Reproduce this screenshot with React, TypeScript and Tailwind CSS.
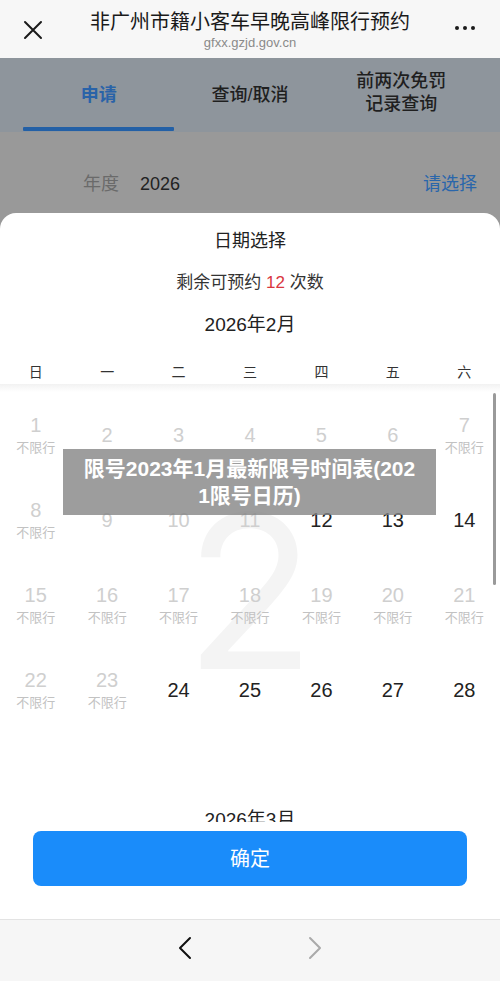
import React from "react";

const FONT = '"Liberation Sans", "Noto Sans CJK SC", sans-serif';

type Cell = { d: number; gray: boolean; sub: boolean };

const rows: Cell[][] = [
  [
    { d: 1, gray: true, sub: true },
    { d: 2, gray: true, sub: false },
    { d: 3, gray: true, sub: false },
    { d: 4, gray: true, sub: false },
    { d: 5, gray: true, sub: false },
    { d: 6, gray: true, sub: false },
    { d: 7, gray: true, sub: true },
  ],
  [
    { d: 8, gray: true, sub: true },
    { d: 9, gray: true, sub: false },
    { d: 10, gray: true, sub: false },
    { d: 11, gray: true, sub: false },
    { d: 12, gray: false, sub: false },
    { d: 13, gray: false, sub: false },
    { d: 14, gray: false, sub: false },
  ],
  [15, 16, 17, 18, 19, 20, 21].map((d) => ({ d, gray: true, sub: true })),
  [
    { d: 22, gray: true, sub: true },
    { d: 23, gray: true, sub: true },
    { d: 24, gray: false, sub: false },
    { d: 25, gray: false, sub: false },
    { d: 26, gray: false, sub: false },
    { d: 27, gray: false, sub: false },
    { d: 28, gray: false, sub: false },
  ],
];

const weekdays = ["日", "一", "二", "三", "四", "五", "六"];

export default function App() {
  return (
    <div
      className="w-[500px] h-[981px] flex flex-col overflow-hidden bg-[#999999]"
      style={{ fontFamily: FONT }}
    >
      {/* Header */}
      <div className="h-[58px] bg-[#f7f7f7] relative flex flex-col items-center shrink-0">
        <svg
          className="absolute left-[22px] top-[19px]"
          width="22"
          height="22"
          viewBox="0 0 22 22"
          fill="none"
          stroke="#1a1a1a"
          strokeWidth="2"
          strokeLinecap="round"
        >
          <path d="M3 3 L19 19 M19 3 L3 19" />
        </svg>
        <div className="text-[20px] leading-[26px] text-[#1a1a1a] mt-[9px]">
          非广州市籍小客车早晚高峰限行预约
        </div>
        <div className="text-[13px] leading-[14px] text-[#8a8a8a] mt-[1px]">
          gfxx.gzjd.gov.cn
        </div>
        <div className="absolute right-[25px] top-[26px] flex gap-[4px]">
          <span className="w-[4px] h-[4px] rounded-full bg-[#1a1a1a]" />
          <span className="w-[4px] h-[4px] rounded-full bg-[#1a1a1a]" />
          <span className="w-[4px] h-[4px] rounded-full bg-[#1a1a1a]" />
        </div>
      </div>

      {/* Tabs (dimmed) */}
      <div className="h-[74px] bg-[#8e959c] grid grid-cols-3 px-[23px] shrink-0">
        <div className="relative flex items-center justify-center">
          <span className="text-[18px] font-bold text-[#2a63a8]">申请</span>
          <span className="absolute left-0 right-0 bottom-[1px] h-[4px] bg-[#2360a6] rounded-[1px]" />
        </div>
        <div className="flex items-center justify-center">
          <span className="text-[18px] font-medium text-[#1f1f1f]">查询/取消</span>
        </div>
        <div className="flex flex-col items-center justify-center text-[18px] leading-[23px] font-medium text-[#1f1f1f] pb-[4px]">
          <span>前两次免罚</span>
          <span>记录查询</span>
        </div>
      </div>

      {/* Year row (dimmed) */}
      <div className="h-[81px] bg-[#999999] flex items-start pt-[40px] pl-[83px] pr-[23px] text-[18px] leading-[24px] shrink-0">
        <span className="text-[#6a6a6a]">年度</span>
        <span className="text-[#222] ml-[21px]">2026</span>
        <span className="ml-auto text-[#2a66ab]">请选择</span>
      </div>

      {/* Sheet */}
      <div className="h-[706px] bg-white rounded-t-[16px] flex flex-col shrink-0">
        <div className="pt-[16px] text-center text-[18px] leading-[24px] text-[#222]">日期选择</div>
        <div className="mt-[18px] text-center text-[17px] leading-[24px] text-[#333]">
          剩余可预约 <span className="text-[#d9363e]">12</span> 次数
        </div>
        <div className="mt-[18px] text-center text-[19px] leading-[24px] text-[#222]">2026年2月</div>
        <div className="mt-[23px] grid grid-cols-7 text-[14px] leading-[24px] text-[#333]">
          {weekdays.map((w) => (
            <div key={w} className="text-center">
              {w}
            </div>
          ))}
        </div>

        {/* Calendar scroll area */}
        <div className="flex-1 relative overflow-hidden">
          <div className="h-[8px] bg-gradient-to-b from-[#f2f2f2] to-white" />
          <div className="relative">
            <div className="absolute left-0 right-0 top-[120px] flex justify-center pointer-events-none">
              <span
                className="text-[214px] leading-[160px] font-normal text-[#f4f4f4]"
                style={{ fontFamily: '"Inter", "Liberation Sans", sans-serif' }}
              >
                2
              </span>
            </div>
            <div className="relative">
              {rows.map((row, ri) => (
                <div key={ri} className="grid grid-cols-7 h-[85px]">
                  {row.map((c) => (
                    <div key={c.d} className="flex flex-col items-center justify-center">
                      <span
                        className={
                          "text-[20px] leading-[24px] " +
                          (c.gray ? "text-[#cfcfcf]" : "text-[#222]")
                        }
                      >
                        {c.d}
                      </span>
                      {c.sub && (
                        <span className="text-[13px] leading-[16px] mt-[3px] text-[#c2c2c2]">
                          不限行
                        </span>
                      )}
                    </div>
                  ))}
                </div>
              ))}
            </div>
            <div className="mt-[76px] text-center text-[19px] leading-[24px] text-[#222]">2026年3月</div>
          </div>
          {/* scrollbar */}
          <div className="absolute right-[4px] top-[9px] w-[3px] h-[192px] rounded-full bg-[#9a9a9a]" />
          {/* overlay caption */}
          <div className="absolute left-[63px] top-[65px] w-[373px] h-[66px] bg-[#858585]/80 flex flex-col items-center justify-center text-white font-bold text-[21px] leading-[27px]">
            <span>限号2023年1月最新限号时间表(202</span>
            <span>1限号日历)</span>
          </div>
        </div>

        {/* Confirm button */}
        <div className="h-[97px] bg-white px-[33px] pt-[9px] shrink-0 relative">
          <div className="h-[55px] rounded-[8px] bg-[#1a8cfa] flex items-center justify-center text-white text-[20px]">
            确定
          </div>
        </div>
      </div>

      {/* Bottom nav */}
      <div className="flex-1 bg-[#f6f6f6] border-t border-[#e3e3e3] flex items-center justify-center gap-[116px] pb-[6px]">
        <svg width="14" height="24" viewBox="0 0 14 24" fill="none" stroke="#111" strokeWidth="2" strokeLinecap="round" strokeLinejoin="round">
          <path d="M12 2 L2 12 L12 22" />
        </svg>
        <svg width="14" height="24" viewBox="0 0 14 24" fill="none" stroke="#aaa" strokeWidth="2" strokeLinecap="round" strokeLinejoin="round">
          <path d="M2 2 L12 12 L2 22" />
        </svg>
      </div>
    </div>
  );
}
